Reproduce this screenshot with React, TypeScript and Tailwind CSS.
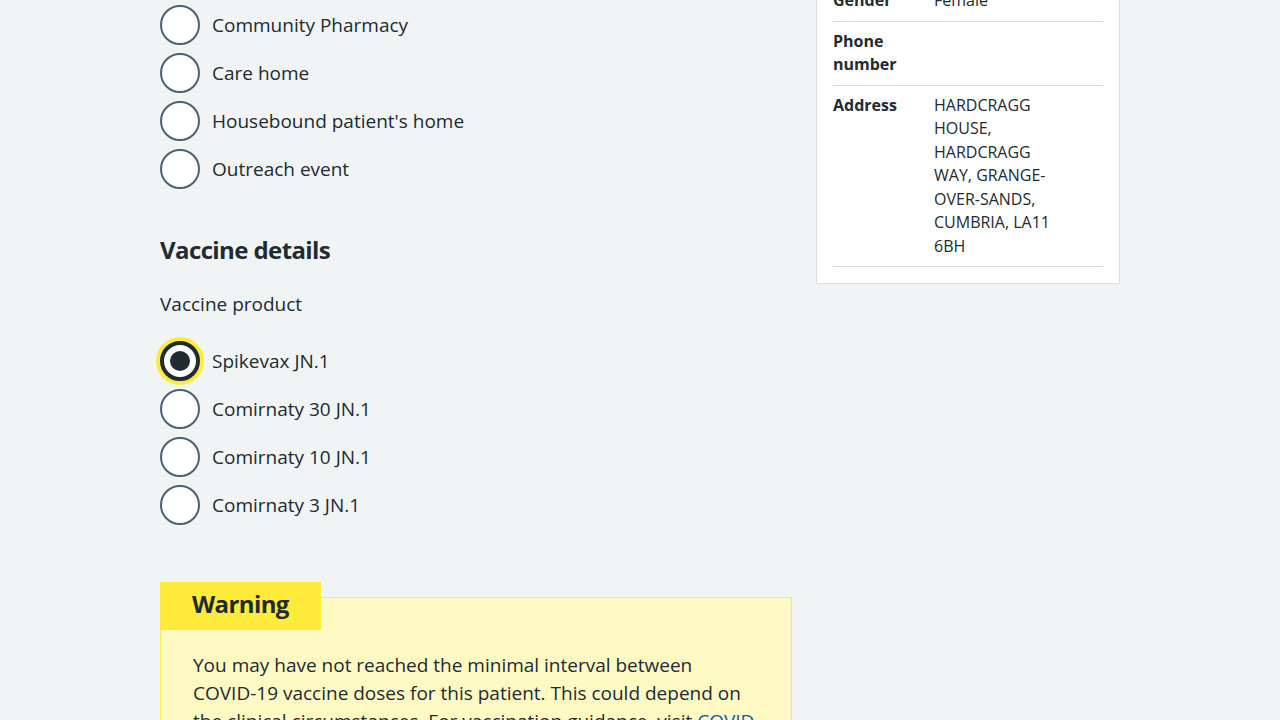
import React from "react";

const font = { fontFamily: '"Open Sans", "Noto Sans", sans-serif' };

function Radio({ label, checked }: { label: string; checked?: boolean }) {
  return (
    <div className="flex items-center gap-3 h-10 mb-2">
      {checked ? (
        <span className="flex items-center justify-center w-10 h-10 rounded-full border-4 border-[#212b32] bg-white shadow-[0_0_0_4px_#ffeb3b] shrink-0">
          <span className="block w-5 h-5 rounded-full bg-[#212b32]" />
        </span>
      ) : (
        <span className="block w-10 h-10 rounded-full border-2 border-[#4c6272] bg-white shrink-0" />
      )}
      <span className="text-[19px] leading-7 text-[#212b32]">{label}</span>
    </div>
  );
}

function Row({ k, v }: { k: string; v: React.ReactNode }) {
  return (
    <div className="flex border-b border-[#d8dde0] py-2">
      <div className="w-[101px] pr-5 font-bold shrink-0">{k}</div>
      <div className="w-[135px]">{v}</div>
    </div>
  );
}

export default function App() {
  return (
    <div className="min-h-screen bg-[#f0f4f5] text-[#212b32] overflow-hidden" style={font}>
      <div className="w-[960px] mx-auto flex gap-6 items-start">
        <div className="w-[632px] shrink-0 mt-[5px]">
          <Radio label="Community Pharmacy" />
          <Radio label="Care home" />
          <Radio label="Housebound patient's home" />
          <Radio label="Outreach event" />

          <h2 className="mt-[45px] text-[24px] leading-8 font-bold tracking-[-0.6px]">Vaccine details</h2>
          <div className="mt-6 text-[19px] leading-7">Vaccine product</div>
          <div className="mt-[23px]">
            <Radio label="Spikevax JN.1" checked />
            <Radio label="Comirnaty 30 JN.1" />
            <Radio label="Comirnaty 10 JN.1" />
            <Radio label="Comirnaty 3 JN.1" />
          </div>

          <div className="mt-[72px] border border-[#ffeb3b] bg-[#fff9c4] pb-8">
            <div className="-mt-[16px] -ml-px w-fit bg-[#ffeb3b] px-8 h-12 leading-[44px] text-[24px] font-bold tracking-[-0.6px]">
              Warning
            </div>
            <p className="mt-[21px] pl-8 pr-7 text-[19px] leading-7">
              You may have not reached the minimal interval between
              <br />
              COVID-19 vaccine doses for this patient. This could depend on
              <br />
              the clinical circumstances. For vaccination guidance, visit{" "}
              <a className="text-[#005eb8] underline">COVID-19: the green book, chapter 14a</a>.
            </p>
          </div>
        </div>

        <div className="w-[304px] shrink-0 -mt-[36px] bg-white border border-[#d8dde0] px-4 pt-4 pb-4 text-[16px] leading-[23.5px]">
          <Row k="Gender" v="Female" />
          <Row k="Phone number" v="" />
          <Row k="Address" v="HARDCRAGG HOUSE, HARDCRAGG WAY, GRANGE-OVER-SANDS, CUMBRIA, LA11 6BH" />
        </div>
      </div>
    </div>
  );
}
